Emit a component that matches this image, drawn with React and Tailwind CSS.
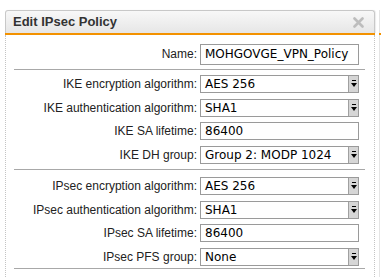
import React from 'react';

const Arrow = () => (
    <div className="w-[10px] h-full bg-[#d6d6d6] border-l border-[#a0a0a0] flex items-center justify-center">
        <svg width="6" height="8" viewBox="0 0 6 8">
            <rect x="1" y="0" width="4" height="1" fill="#000" />
            <polygon points="0,3 6,3 3,7" fill="#000" />
        </svg>
    </div>
);

const Field = ({ value, select, tall }) => (
    <div className={`w-[159px] ${tall ? 'h-[21px]' : 'h-[18px]'} border border-[#9a9a9a] bg-white flex items-stretch`}>
        <div className="flex-1 flex items-center pl-[4px] text-[12px] text-black font-['DejaVu_Sans'] whitespace-nowrap">
            {value}
        </div>
        {select && <Arrow />}
    </div>
);

const Row = ({ label, value, select, tall, h = 'h-[23.5px]' }) => (
    <div className={`flex items-center ${h}`}>
        <div className="w-[194px] pr-[3px] text-right text-[12px] text-[#222] whitespace-nowrap">{label}:</div>
        <Field value={value} select={select} tall={tall} />
    </div>
);

const Separator = () => <div className="ml-[8px] w-[351px] h-[1px] bg-[#a8a8a8]" />;

export default function App() {
    const ike = [
        ['IKE encryption algorithm', 'AES 256', true],
        ['IKE authentication algorithm', 'SHA1', true],
        ['IKE SA lifetime', '86400', false],
        ['IKE DH group', 'Group 2: MODP 1024', true],
    ];
    const ipsec = [
        ['IPsec encryption algorithm', 'AES 256', true],
        ['IPsec authentication algorithm', 'SHA1', true],
        ['IPsec SA lifetime', '86400', false],
        ['IPsec PFS group', 'None', true],
    ];

    return (
        <div className="w-[381px] h-[277px] bg-white overflow-hidden relative font-['Liberation_Sans',Arial,sans-serif]">
            {/* neighbouring panel edge */}
            <div className="absolute left-[379px] top-[10px] w-[1px] h-[267px] bg-[#e4e4e4]" />
            <div className="absolute left-[379px] top-[33px] w-[2px] h-[2px] bg-[#f39200]" />

            <div className="pt-[10px] pl-[5px] w-[375px]">
                <div className="h-[23px] border border-b-0 border-[#c8c8c8] rounded-t-[3px] bg-gradient-to-b from-[#f8f8f8] to-[#e6e6e6] flex items-center justify-between pl-[7px] pr-[10px] shadow-[1px_0_1px_rgba(0,0,0,0.08)]">
                    <span className="text-[13px] font-bold text-[#333]">Edit IPsec Policy</span>
                    <svg width="11" height="11" viewBox="0 0 11 11">
                        <path d="M1.5 1.5 L9.5 9.5 M9.5 1.5 L1.5 9.5" stroke="#bdbdbd" strokeWidth="2.6" strokeLinecap="round" />
                    </svg>
                </div>
                <div className="h-[2px] bg-[#f39200]" />
                <div className="border-l border-r border-dotted border-[#c4c4c4] pt-[7px] h-[260px]">
                    <Row label="Name" value="MOHGOVGE_VPN_Policy" tall h="h-[24px]" />
                    <div className="h-[3px]" />
                    <Separator />
                    <div className="pt-[2.5px]">
                        {ike.map(([l, v, s]) => <Row key={l} label={l} value={v} select={s} />)}
                    </div>
                    <div className="h-[2.5px]" />
                    <Separator />
                    <div className="pt-[4.25px]">
                        {ipsec.map(([l, v, s]) => <Row key={l} label={l} value={v} select={s} />)}
                    </div>
                    <Separator />
                </div>
            </div>
        </div>
    );
}
